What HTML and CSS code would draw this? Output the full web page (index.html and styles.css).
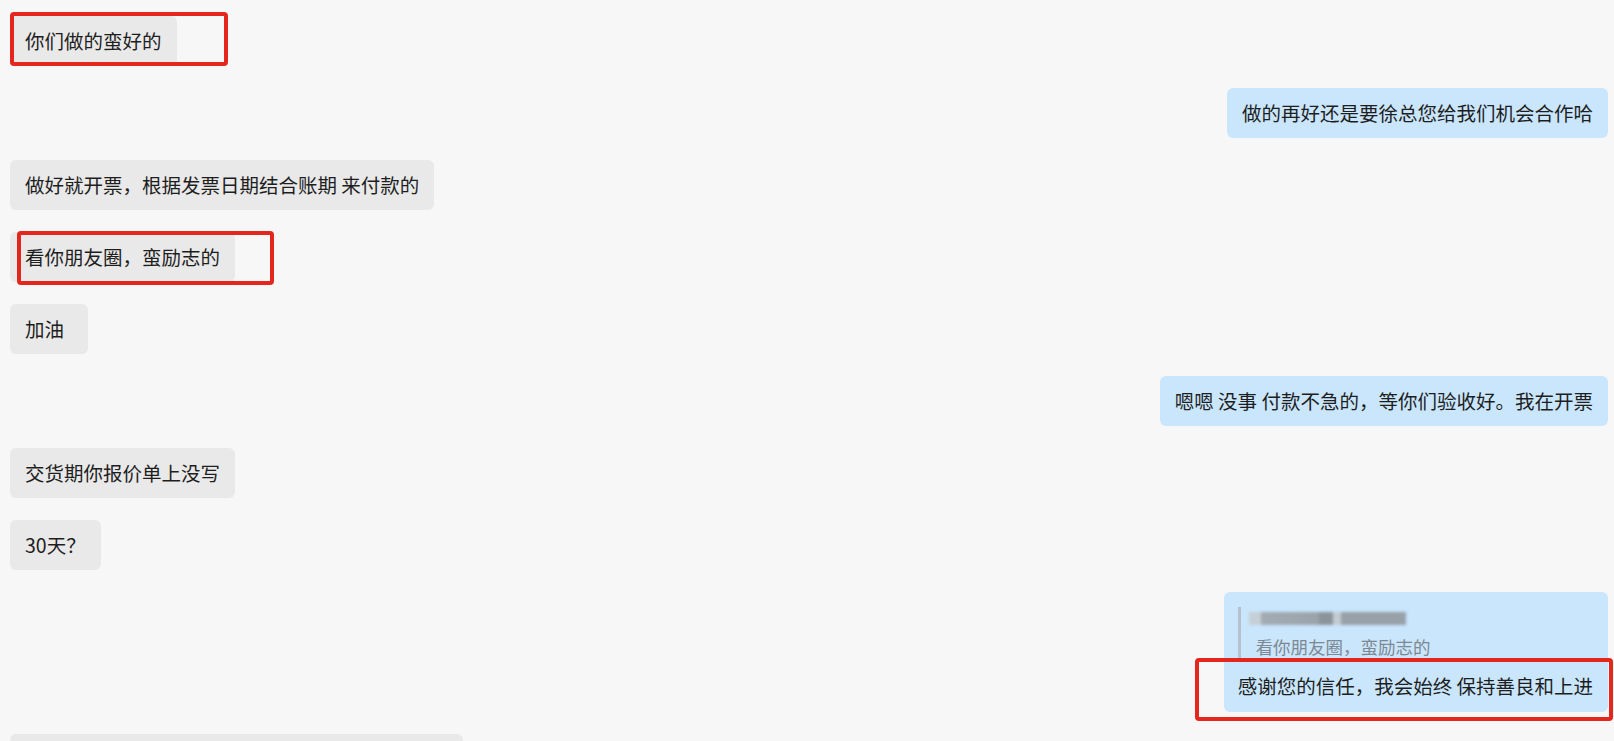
FILE: index.html
```html
<!DOCTYPE html>
<html>
<head>
    <meta charset="UTF-8">
    <title>聊天记录</title>
    <link rel="stylesheet" href="styles.css">
</head>
<body>
<div class="chat">
    <div class="msg">
        <div class="bubble">你们做的蛮好的<span class="mark mark-first"></span></div>
    </div>
    <div class="msg mine">
        <div class="bubble">做的再好还是要徐总您给我们机会合作哈</div>
    </div>
    <div class="msg">
        <div class="bubble">做好就开票，根据发票日期结合账期 来付款的</div>
    </div>
    <div class="msg">
        <div class="bubble">看你朋友圈，蛮励志的<span class="mark mark-second"></span></div>
    </div>
    <div class="msg">
        <div class="bubble short">加油</div>
    </div>
    <div class="msg mine">
        <div class="bubble">嗯嗯 没事 付款不急的，等你们验收好。我在开票</div>
    </div>
    <div class="msg">
        <div class="bubble">交货期你报价单上没写</div>
    </div>
    <div class="msg">
        <div class="bubble">30天？</div>
    </div>
    <div class="msg mine">
        <div class="bubble reply">
            <div class="quote">
                <div class="quote-name"><span class="blurred"></span></div>
                <div class="quote-text">看你朋友圈，蛮励志的</div>
            </div>
            <div class="reply-text">感谢您的信任，我会始终 保持善良和上进</div>
            <span class="mark mark-third"></span>
        </div>
    </div>
    <div class="msg">
        <div class="bubble cut"></div>
    </div>
</div>
</body>
</html>
```

FILE: styles.css
```css
body {
    margin: 0;
    padding: 0;
    height: 100vh;
    overflow: hidden;
    background-color: #F7F7F7;
    font-family: "Noto Sans CJK SC", "Noto Sans", sans-serif;
    font-size: 19.5px;
    color: #1E1E1E;
}

.chat {
    display: flex;
    flex-direction: column;
    gap: 22px;
    padding: 16px 6px 0 10px;
}

.msg {
    display: flex;
}

.msg.mine {
    justify-content: flex-end;
}

.bubble {
    position: relative;
    padding: 10px 15px;
    line-height: 30px;
    white-space: nowrap;
    background-color: #E9E9E9;
    border-radius: 6px;
}

.bubble.short {
    min-width: 48px;
}

.bubble.cut {
    width: 423px;
    height: 30px;
}

.mine .bubble {
    background-color: #C9E6FD;
}

.bubble.reply {
    padding: 15px 15px 11px 14px;
}

.quote {
    border-left: 3px solid #B4C2CF;
    padding-left: 15px;
    margin-bottom: 10px;
}

.quote-name {
    height: 26px;
}

.blurred {
    display: block;
    margin-left: -7px;
    padding-top: 5px;
    width: 157px;
    height: 13px;
    background: linear-gradient(90deg,
        #C6CED6 0, #C6CED6 12px,
        #A3ABB3 12px, #9AA2AA 70px,
        #8C949B 70px, #8C949B 84px,
        #C3CBD3 84px, #C3CBD3 92px,
        #98A0A8 92px, #98A0A8 157px);
    background-clip: content-box;
    filter: blur(1.5px);
}

.quote-text {
    font-size: 17.5px;
    line-height: 28px;
    color: #7E8892;
}

.reply-text {
    line-height: 30px;
}

.mark {
    position: absolute;
    box-sizing: border-box;
    border: 4px solid #E4261C;
    border-radius: 4px;
    pointer-events: none;
}

.mark-first {
    left: 0;
    top: -4px;
    width: 218px;
    height: 54px;
}

.mark-second {
    left: 7px;
    top: -1px;
    width: 257px;
    height: 54px;
}

.mark-third {
    left: -29px;
    top: 66px;
    width: 418px;
    height: 63px;
}
```
